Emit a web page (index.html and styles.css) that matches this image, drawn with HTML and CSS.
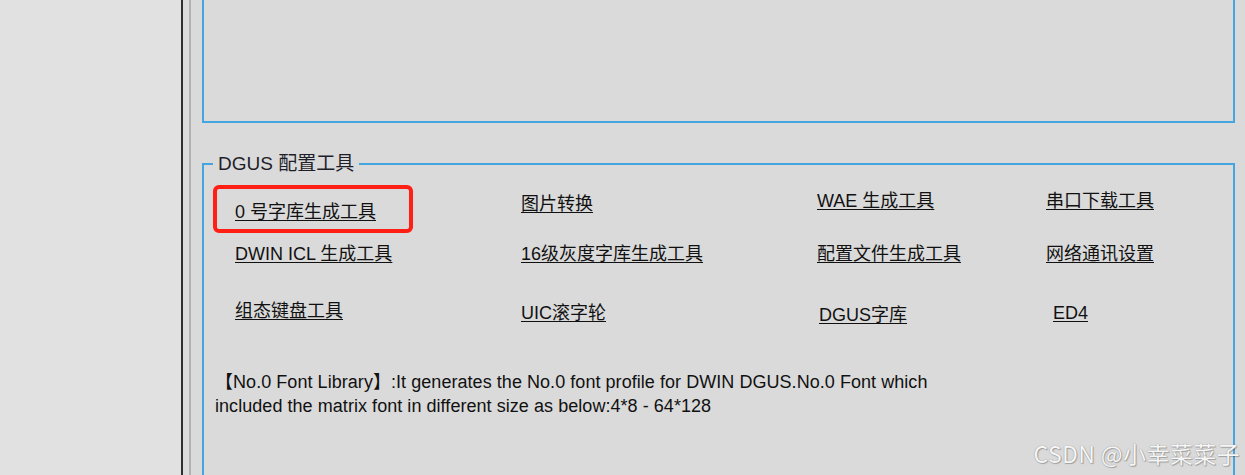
FILE: index.html
```html
<!DOCTYPE html>
<html lang="zh-CN">
<head>
<meta charset="utf-8">
<title>DGUS 配置工具</title>
<link rel="stylesheet" href="styles.css">
</head>
<body>
<div class="window">
  <aside class="sidebar"></aside>
  <div class="splitter"></div>
  <div class="gutter"></div>
  <main class="content">
    <section class="panel-top"></section>
    <fieldset class="group">
      <legend class="group-title">DGUS 配置工具</legend>
      <div class="tools">
        <div class="highlight"><a class="link" href="#">0 号字库生成工具</a></div>
        <a class="link drop-7" href="#">图片转换</a>
        <a class="link drop-4" href="#">WAE 生成工具</a>
        <a class="link drop-4" href="#">串口下载工具</a>

        <a class="link first" href="#">DWIN ICL 生成工具</a>
        <a class="link" href="#">16级灰度字库生成工具</a>
        <a class="link" href="#">配置文件生成工具</a>
        <a class="link" href="#">网络通讯设置</a>

        <a class="link first" href="#">组态键盘工具</a>
        <a class="link drop-2" href="#">UIC滚字轮</a>
        <a class="link drop-4 shift-2" href="#">DGUS字库</a>
        <a class="link drop-2 shift-7" href="#">ED4</a>
      </div>
      <p class="description">【No.0 Font Library】:It generates the No.0 font profile for DWIN DGUS.No.0 Font which<br>included the matrix font in different size as below:4*8 - 64*128</p>
    </fieldset>
  </main>
  <div class="watermark">CSDN @小幸菜菜子</div>
</div>
</body>
</html>
```
FILE: styles.css
```css
html, body {
  margin: 0;
  padding: 0;
}
body {
  width: 1245px;
  height: 475px;
  overflow: hidden;
  background: #dadada;
  font-family: "Liberation Sans", "Noto Sans CJK SC", sans-serif;
  color: #111;
}
.window {
  position: relative;
  display: flex;
  width: 1245px;
  height: 475px;
}
.sidebar {
  width: 181px;
  background: #e1e1e1;
}
.splitter {
  width: 2px;
  background: #2e2e2e;
}
.gutter {
  width: 6px;
  background: #dcdcdc;
  border-right: 2px solid #b2b2b2;
}
.content {
  flex: 1;
  display: flex;
  flex-direction: column;
  padding: 0 10px 0 11px;
  min-width: 0;
}
.panel-top {
  height: 123px;
  box-sizing: border-box;
  border: 2px solid #45a5e0;
  border-top: none;
}
.group {
  margin: 31px 0 0 0;
  padding: 0 0 0 9px;
  border: 2px solid #45a5e0;
  border-bottom: none;
  flex: 1;
  min-width: 0;
}
.group-title {
  padding: 0 5px;
  font-size: 19px;
  line-height: 20px;
  color: #1e1e2a;
}
.tools {
  margin-top: 11px;
  display: grid;
  grid-template-columns: 308px 296px 229px 1fr;
  grid-template-rows: 57px 57px auto;
  align-items: start;
  justify-items: start;
}
.link {
  font-size: 18px;
  line-height: 24px;
  color: #111;
  text-decoration: underline;
  text-underline-offset: 2px;
  white-space: nowrap;
}
.first {
  margin-left: 22px;
}
.highlight {
  width: 200px;
  height: 48px;
  box-sizing: border-box;
  border: 4px solid #ff1f14;
  border-radius: 6px;
  padding: 11px 0 0 18px;
}
.drop-2 { margin-top: 2px; }
.drop-4 { margin-top: 4px; }
.drop-7 { margin-top: 7px; }
.shift-2 { margin-left: 2px; }
.shift-7 { margin-left: 7px; }
.description {
  margin: 43px 0 0 2px;
  font-size: 18px;
  line-height: 24px;
  letter-spacing: 0.05px;
  color: #111;
}
.watermark {
  position: absolute;
  right: 5px;
  bottom: 9px;
  font-family: "Noto Sans CJK SC", sans-serif;
  font-size: 23px;
  line-height: 26px;
  letter-spacing: 0.4px;
  color: #f6f6f6;
  text-shadow: 0 0 1px #7a7a7a, 1px 1px 1px rgba(0,0,0,0.25);
}
```
